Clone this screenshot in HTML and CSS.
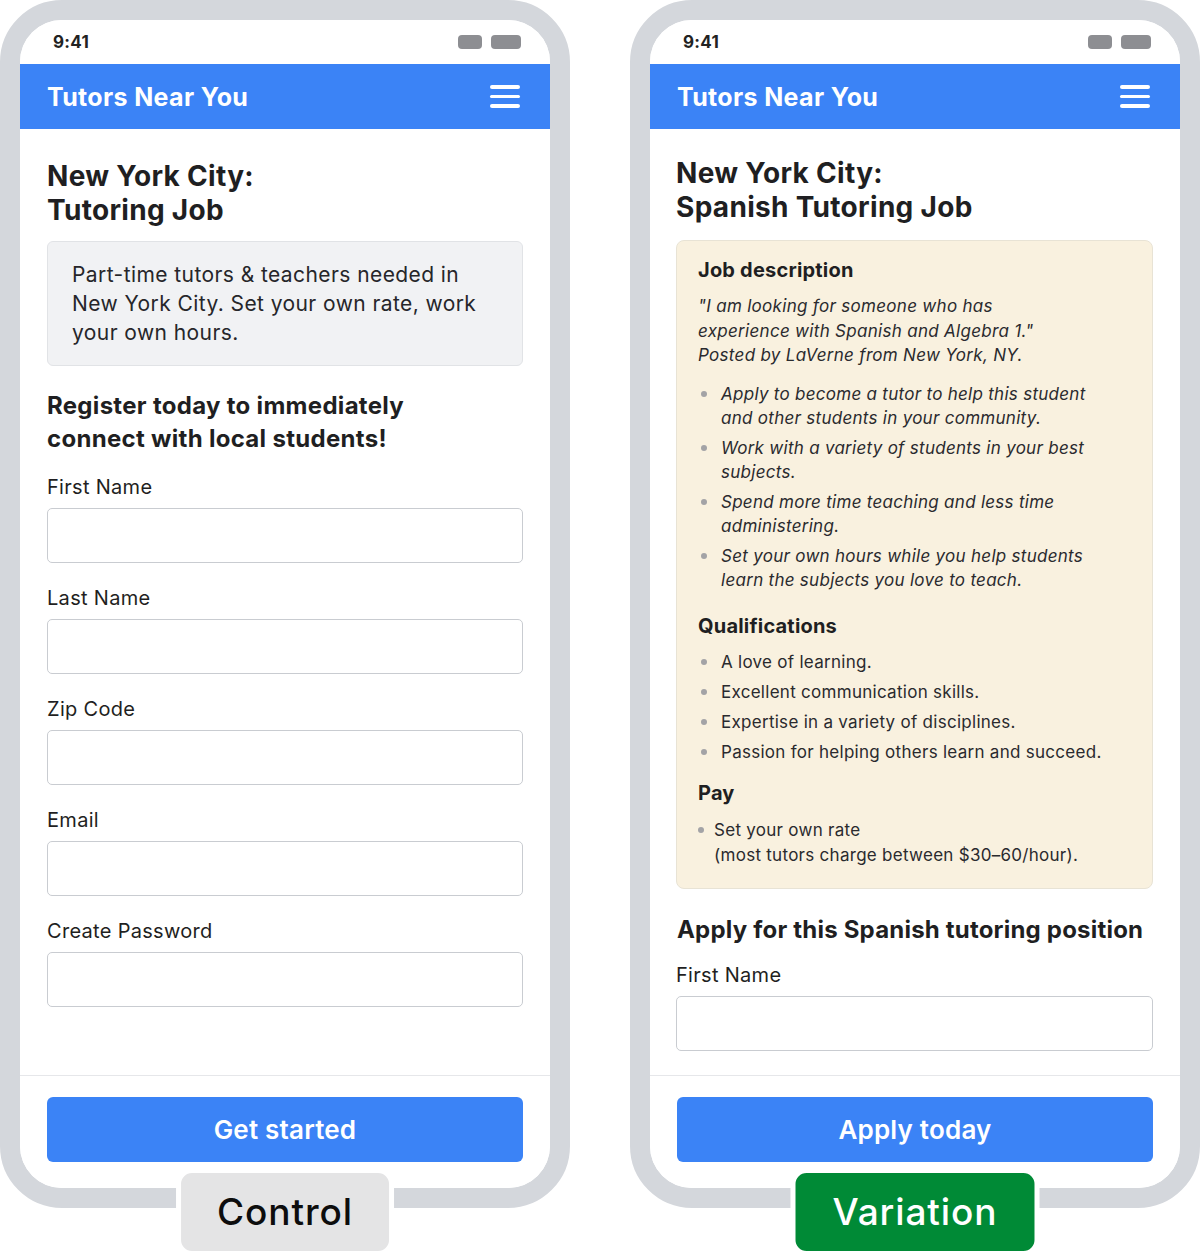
FILE: index.html
```html
<!DOCTYPE html>
<html lang="en">
<head>
<meta charset="utf-8">
<title>Control vs Variation</title>
<link rel="stylesheet" href="styles.css">
</head>
<body>
<div class="stage">
  <div class="phone">
    <div class="screen">
      <div class="status">
        <span class="time">9:41</span>
        <span class="pills"><i class="pill pill-a"></i><i class="pill pill-b"></i></span>
      </div>
      <header class="appbar">
        <span class="brand">Tutors Near You</span>
        <span class="menu"><i></i><i></i><i></i></span>
      </header>
      <main class="content content-control">
        <h1 class="title">New York City:<br>Tutoring Job</h1>
        <div class="note">Part-time tutors &amp; teachers needed in New York City. Set your own rate, work your own hours.</div>
        <h2 class="subtitle">Register today to immediately<br>connect with local students!</h2>
        <div class="field"><label class="label">First Name</label><div class="input"></div></div>
        <div class="field"><label class="label">Last Name</label><div class="input"></div></div>
        <div class="field"><label class="label">Zip Code</label><div class="input"></div></div>
        <div class="field"><label class="label">Email</label><div class="input"></div></div>
        <div class="field"><label class="label">Create Password</label><div class="input"></div></div>
      </main>
      <footer class="footer"><button class="cta">Get started</button></footer>
    </div>
    <div class="badge badge-control">Control</div>
  </div>

  <div class="phone">
    <div class="screen">
      <div class="status">
        <span class="time">9:41</span>
        <span class="pills"><i class="pill pill-a"></i><i class="pill pill-b"></i></span>
      </div>
      <header class="appbar">
        <span class="brand">Tutors Near You</span>
        <span class="menu"><i></i><i></i><i></i></span>
      </header>
      <main class="content content-variation">
        <h1 class="title">New York City:<br>Spanish Tutoring Job</h1>
        <div class="jobbox">
          <h3 class="jobhead">Job description</h3>
          <p class="quote">"I am looking for someone who has<br>experience with Spanish and Algebra 1."<br>Posted by LaVerne from New York, NY.</p>
          <ul class="list list-italic">
            <li>Apply to become a tutor to help this student<br>and other students in your community.</li>
            <li>Work with a variety of students in your best<br>subjects.</li>
            <li>Spend more time teaching and less time<br>administering.</li>
            <li>Set your own hours while you help students<br>learn the subjects you love to teach.</li>
          </ul>
          <h3 class="jobhead jobhead-q">Qualifications</h3>
          <ul class="list list-plain">
            <li>A love of learning.</li>
            <li>Excellent communication skills.</li>
            <li>Expertise in a variety of disciplines.</li>
            <li>Passion for helping others learn and succeed.</li>
          </ul>
          <h3 class="jobhead jobhead-p">Pay</h3>
          <ul class="list list-pay">
            <li>Set your own rate<br>(most tutors charge between $30–60/hour).</li>
          </ul>
        </div>
        <h2 class="subtitle subtitle-apply">Apply for this Spanish tutoring position</h2>
        <div class="field field-apply"><label class="label">First Name</label><div class="input"></div></div>
      </main>
      <footer class="footer"><button class="cta">Apply today</button></footer>
    </div>
    <div class="badge badge-variation">Variation</div>
  </div>
</div>
</body>
</html>
```

FILE: styles.css
```css
* { box-sizing: border-box; }

html, body {
  margin: 0;
  padding: 0;
  background: #ffffff;
}

body {
  font-family: Inter, "Noto Sans", "Liberation Sans", sans-serif;
  color: #1f1f22;
  width: 1200px;
  height: 1257px;
  overflow: hidden;
}

.stage {
  display: flex;
  gap: 60px;
  width: 1200px;
}

.phone {
  position: relative;
  width: 570px;
  height: 1208px;
  border: 20px solid #d4d7dc;
  border-radius: 62px;
}

.screen {
  height: 100%;
  background: #ffffff;
  border-radius: 42px;
  overflow: hidden;
  display: flex;
  flex-direction: column;
}

.status {
  height: 44px;
  flex: none;
  display: flex;
  align-items: center;
  justify-content: space-between;
  padding: 0 29px 0 33px;
}

.time {
  font-size: 17px;
  font-weight: 700;
  color: #222222;
  letter-spacing: 0.3px;
}

.pills {
  display: flex;
  gap: 9px;
  align-items: center;
}

.pill {
  display: block;
  height: 14px;
  border-radius: 4px;
  background: #8d8e92;
}

.pill-a { width: 24px; }
.pill-b { width: 30px; }

.appbar {
  height: 65px;
  flex: none;
  background: #3b83f6;
  display: flex;
  align-items: center;
  justify-content: space-between;
  padding: 0 30px 0 27px;
}

.brand {
  color: #ffffff;
  font-size: 25px;
  font-weight: 700;
  letter-spacing: 0.35px;
}

.menu {
  display: flex;
  flex-direction: column;
  gap: 6px;
  width: 30px;
}

.menu i {
  display: block;
  height: 3.6px;
  border-radius: 2px;
  background: #ffffff;
}

.content {
  flex: 1;
  overflow: hidden;
  padding: 30px 27px 0 27px;
}

.content-variation {
  padding-top: 27px;
  padding-left: 26px;
  padding-right: 27px;
}

.title {
  margin: 0;
  font-size: 28px;
  line-height: 34px;
  font-weight: 700;
  color: #1f1f22;
  letter-spacing: 0.3px;
}

.note {
  margin-top: 14px;
  background: #f1f2f4;
  border: 1px solid #e1e3e6;
  border-radius: 6px;
  padding: 18px 24px;
  font-size: 21px;
  line-height: 29px;
  color: #26262a;
  letter-spacing: 0.42px;
}

.subtitle {
  margin: 23px 0 0 0;
  font-size: 24px;
  line-height: 33px;
  font-weight: 700;
  color: #1f1f22;
  letter-spacing: 0.3px;
}

.field {
  margin-top: 20px;
}

.field + .field {
  margin-top: 23px;
}

.label {
  display: block;
  font-size: 20px;
  line-height: 24px;
  color: #1f1f22;
  letter-spacing: 0.3px;
}

.input {
  margin-top: 9px;
  height: 55px;
  border: 1px solid #c9ccd1;
  border-radius: 5px;
  background: #ffffff;
}

.jobbox {
  margin-top: 16px;
  background: #f9f1df;
  border: 1px solid #e8e3d5;
  border-radius: 8px;
  padding: 16px 20px 21px 21px;
}

.jobhead {
  margin: 0;
  font-size: 20px;
  line-height: 26px;
  font-weight: 700;
  color: #1f1f22;
  letter-spacing: 0.2px;
}

.jobhead-q { margin-top: 20px; }
.jobhead-p { margin-top: 16px; }

.quote {
  margin: 11px 0 0 0;
  font-size: 17px;
  line-height: 24.5px;
  font-style: italic;
  color: #2a2a2e;
  letter-spacing: 0.3px;
}

.list {
  list-style: none;
  margin: 0;
  padding: 0;
  font-size: 17px;
  line-height: 24.5px;
  color: #2a2a2e;
  letter-spacing: 0.28px;
}

.list li {
  display: flex;
  padding-left: 0;
}

.list li::before {
  content: "";
  flex: none;
  width: 6px;
  height: 6px;
  border-radius: 50%;
  background: #a3a3a6;
  margin: 9px 14px 0 3px;
}

.list-italic {
  margin-top: 14px;
  font-style: italic;
}

.list-italic li + li { margin-top: 5px; }

.list-plain { margin-top: 11px; }
.list-plain li + li { margin-top: 5.5px; }

.list-pay { margin-top: 12px; }
.list-pay li::before {
  margin: 9px 10px 0 0;
}

.subtitle-apply {
  margin-top: 24px;
  font-size: 24px;
  padding-left: 1px;
  letter-spacing: 0.2px;
}

.field-apply {
  margin-top: 17px;
}

.footer {
  flex: none;
  border-top: 1px solid #e6e7ea;
  padding: 21px 27px 26px 27px;
}

.cta {
  display: block;
  width: 100%;
  height: 65px;
  border: 0;
  border-radius: 6px;
  background: #3b83f6;
  color: #ffffff;
  font-family: Inter, "Noto Sans", "Liberation Sans", sans-serif;
  font-size: 26px;
  font-weight: 600;
  letter-spacing: 0.2px;
}

.badge {
  position: absolute;
  top: 1148px;
  left: 50%;
  transform: translateX(-50%);
  height: 88px;
  line-height: 78px;
  border: 5px solid #ffffff;
  border-radius: 16px;
  font-size: 37px;
  font-weight: 500;
  letter-spacing: 0.9px;
  white-space: nowrap;
}

.badge-control {
  background: #e4e4e5;
  color: #0d0d0d;
  padding: 0 36px;
}

.badge-variation {
  background: #008a36;
  color: #ffffff;
  padding: 0 37px;
}
```
